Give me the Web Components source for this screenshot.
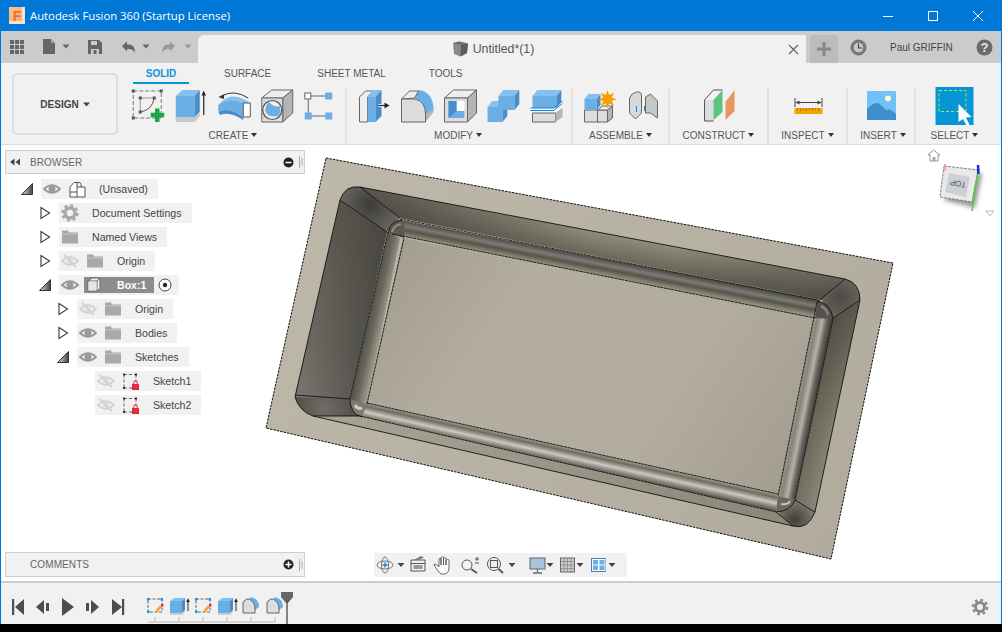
<!DOCTYPE html>
<html><head><meta charset="utf-8"><style>
html,body{margin:0;padding:0;background:#000;overflow:hidden}
body{width:1002px;height:632px;font-family:"Liberation Sans",Arial,sans-serif}
</style></head><body>
<fx-app>
  <fx-titlebar slot="title">Autodesk Fusion 360 (Startup License)</fx-titlebar>
  <fx-tabbar slot="tabs" doc="Untitled*(1)" user="Paul GRIFFIN"></fx-tabbar>
  <fx-ribbon slot="ribbon">
    <fx-group label="CREATE" w="220" pr="8" tools="sketch:148,extrude:190.5,revolve:233,hole:275.5,form:318"></fx-group>
    <fx-group label="MODIFY" w="226" ls="-2" tools="press:374,fillet:417,shell:460,combine:503,split:546"></fx-group>
    <fx-group label="ASSEMBLE" w="97" ls="-1" tools="newcomp:601,joint:642"></fx-group>
    <fx-group label="CONSTRUCT" w="99" ls="-1" tools="construct:719.5"></fx-group>
    <fx-group label="INSPECT" w="79" ls="-1" tools="inspect:808.5"></fx-group>
    <fx-group label="INSERT" w="68" ls="1" tools="insert:882"></fx-group>
    <fx-group label="SELECT" w="77" last tools="select:954.5"></fx-group>
  </fx-ribbon>
  <fx-workspace slot="main">
    <fx-panel title="BROWSER" back sign="minus"></fx-panel>
    <fx-tree>
      <fx-row depth="0" exp="open" eye="on" icon="comp" label="(Unsaved)"></fx-row>
      <fx-row depth="1" exp="closed" icon="gear" label="Document Settings"></fx-row>
      <fx-row depth="1" exp="closed" icon="folder" label="Named Views"></fx-row>
      <fx-row depth="1" exp="closed" eye="off" icon="folder" label="Origin"></fx-row>
      <fx-row depth="1" exp="open" eye="on" icon="box" label="Box:1" selected></fx-row>
      <fx-row depth="2" exp="closed" eye="off" icon="folder" label="Origin"></fx-row>
      <fx-row depth="2" exp="closed" eye="on" icon="folder" label="Bodies"></fx-row>
      <fx-row depth="2" exp="open" eye="on" icon="folder" label="Sketches"></fx-row>
      <fx-row depth="3" eye="off" icon="sketchlock" label="Sketch1"></fx-row>
      <fx-row depth="3" eye="off" icon="sketchlock" label="Sketch2"></fx-row>
    </fx-tree>
    <fx-footer>
      <fx-panel title="COMMENTS" sign="plus" tall></fx-panel>
      <fx-navbar></fx-navbar>
    </fx-footer>
  </fx-workspace>
  <fx-timeline slot="timeline"></fx-timeline>
</fx-app>
<script>
const C={b:'#6aaee6',bt:'#86c0ee',bs:'#4b8bc6',g:'#dcdcdc',gt:'#eeeeee',gs:'#b4b4b4',l:'#666'};
const svg=(x,y,w,h,inner)=>`<svg xmlns="http://www.w3.org/2000/svg" width="${w}" height="${h}" viewBox="${x} ${y} ${w} ${h}" style="display:block">${inner}</svg>`;
const poly=(p,f,st)=>`<polygon points="${p}" fill="${f}"${st?` stroke="${st}" stroke-width="1"`:''}/>`;
const caret=(x,y,c='#333')=>`<path d="M${x-3.5} ${y-2}h7l-3.5 4z" fill="${c}"/>`;
const bluecube=(x,y,w,h,d)=>poly(`${x},${y+d} ${x+w},${y+d} ${x+w},${y+h} ${x},${y+h}`,C.b)+poly(`${x},${y+d} ${x+d*.8},${y} ${x+w+d*.8},${y} ${x+w},${y+d}`,C.bt)+poly(`${x+w},${y+d} ${x+w+d*.8},${y} ${x+w+d*.8},${y+h-d} ${x+w},${y+h}`,C.bs);
const TOOLS={
sketch:`<path d="M133 91H161V118H133Z" fill="none" stroke="#777" stroke-dasharray="4 2"/><path d="M140 112V98H154" fill="none" stroke="#999"/><path d="M154 98Q152 110 140 112" fill="none" stroke="#555"/><g fill="#555"><rect x="131.500" y="89.500" width="3" height="3"/><rect x="159.500" y="89.500" width="3" height="3"/><rect x="131.500" y="116.500" width="3" height="3"/><rect x="138.500" y="96.500" width="3" height="3"/><rect x="152.500" y="96.500" width="3" height="3"/><rect x="138.500" y="110.500" width="3" height="3"/></g><path d="M150.500 115H164M157 108.500V122" stroke="#1aa64b" stroke-width="4.500" fill="none"/>`,
extrude:poly('176,96 195,96 195,117 176,117',C.b)+poly('176,96 183,90 200,90 195,96',C.bt)+poly('195,96 200,90 200,112 195,117',C.bs)+poly('176,117 195,117 200,112 200,116 195,122 176,122','#c9c9c9')+`<path d="M204 115V93" stroke="#222" stroke-width="1.200"/><path d="M204 90.500l-2.200 5h4.400z" fill="#222"/>`,
revolve:`<path d="M218 112V105Q229 96 243 103V117Q229 106 218 112Z" fill="${C.b}"/><path d="M218 105Q229 96 243 103L250 103Q233 91 222 101Z" fill="${C.bt}"/><path d="M243 103H250V117H243Z" fill="#fff" stroke="#555"/><path d="M218 112Q229 106 243 117V120Q229 111 220 115Z" fill="${C.bs}"/><path d="M221 96Q234 89 248 98" fill="none" stroke="#333" stroke-width="1"/><path d="M218 97l6-2.500-.5 4.500z" fill="#333"/>`,
hole:poly('262,98 283,98 293,90 272,90',C.gt,C.l)+poly('283,98 293,90 293,113 283,122',C.gs,C.l)+poly('262,98 283,98 283,122 262,122',C.g,C.l)+`<circle cx="272.500" cy="110" r="9.500" fill="#eee" stroke="#555" stroke-width="1.200"/><path d="M269 102Q275 108 280 106Q282 113 278 116Q268 118 265.500 111Q266 105 269 102Z" fill="${C.b}"/>`,
form:`<path d="M308 96H328M308 96V116H328" stroke="#666" fill="none"/><rect x="304.500" y="93" width="6" height="6" fill="#fff" stroke="#666"/><rect x="325" y="92.500" width="7" height="7" fill="${C.b}"/><rect x="304.500" y="112.500" width="7" height="7" fill="${C.b}"/><rect x="325" y="112.500" width="7" height="7" fill="${C.b}"/>`,
press:`<path d="M359 122V97L365 91H373L367 97V122Z" fill="#eee" stroke="#666"/>`+poly('367,97 375,97 375,122 367,122',C.b)+poly('367,97 372,90 381,90 375,97',C.bt)+poly('375,97 381,90 381,116 375,122',C.bs)+`<path d="M378 105.500H385" stroke="#fff" stroke-width="3"/><path d="M378 105.500H385" stroke="#222" stroke-width="1.300"/><path d="M389 105.500l-5-3v6z" fill="#222"/>`,
fillet:`<path d="M414 98L418 90Q433 92 433 110L425 117Q425 102 414 98Z" fill="${C.b}"/><path d="M401 99L409 91H418L414 98Z" fill="${C.gt}" stroke="#666"/><path d="M425 114L433 109V112L425 122Z" fill="${C.gs}"/><path d="M401 122V99H414Q425 101 425 114V122Z" fill="${C.g}" stroke="#666"/>`,
shell:poly('444,98 467,98 476,90 453,90',C.gt,C.l)+poly('467,98 476,90 476,113 467,122',C.gs,C.l)+poly('444,98 467,98 467,122 444,122',C.g,C.l)+`<rect x="448" y="101" width="16" height="17" fill="#fff"/><path d="M448 101H456V111H464V118H448Z" fill="${C.b}"/><path d="M448 101H456V111L448 118Z" fill="${C.bs}"/>`,
combine:bluecube(487,101,15,21,6)+bluecube(498,90,16,20,6),
split:poly('532,113 555,113 555,122 532,122',C.g,C.l)+poly('555,113 562,108 562,117 555,122',C.gs)+bluecube(532,90,24,18,6)+`<path d="M530 108H553L562 101M530 110.500H553L562 103.500" stroke="#1187e6" stroke-width="1" fill="none"/>`,
newcomp:poly('584,110 599,110 599,122 584,122',C.g,C.l)+poly('597,110 607,110 607,122 597,122',C.g,C.l)+poly('607,110 612,106 612,118 607,122',C.gs,C.l)+poly('597,110 602,106 612,106 607,110',C.gt,C.l)+bluecube(584,94,12,16,5)+`<path d="M607 90l1.700 5 4.800-2.200-2.200 4.700 5 1.800-5 1.800 2.200 4.700-4.800-2.200-1.700 5-1.700-5-4.800 2.200 2.200-4.700-5-1.800 5-1.800-2.200-4.700 4.800 2.200z" fill="#f5a000"/>`,
joint:`<path d="M629 98Q631 93 636 92Q641 91 641 96V113L635 119L629 113Z" fill="#d8d8d8" stroke="#666"/><path d="M645 97L650 94L657 101V118L650 113L645 113Z" fill="#c8c8c8" stroke="#666"/><path d="M636 106V112M644 106V111" stroke="#1187e6" stroke-width="1"/>`,
construct:poly('704,100 713,100 713,121 704,121','#ddd')+poly('704,100 713,90 722,90 713,100','#f2f2f2')+`<path d="M704 121V100L713 90H722M704 121H713" fill="none" stroke="#555"/>`+poly('713,100 722,90 722,112 713,120','#5ac57f')+poly('725,102 734,90 734,111 725,120','#e8975f'),
inspect:`<rect x="794" y="108" width="28" height="6" fill="#f5a200"/><path d="M797 108v2M800 108v3M803 108v2M806 108v3M809 108v2M812 108v3M815 108v2M818 108v3" stroke="#a56c00" stroke-width=".8"/><path d="M794.500 98V107M821.500 98V107" stroke="#444"/><path d="M796 102.500H820" stroke="#444"/><path d="M795 102.500l4-2v4zM821 102.500l-4-2v4z" fill="#444"/>`,
insert:`<rect x="867" y="91" width="29" height="29" fill="#70c0fa"/><circle cx="888" cy="98.500" r="3" fill="#fdf6c8"/><path d="M867 120V109Q873 102 878 103Q883 106 886 110Q890 108 896 114V120Z" fill="#3f8fce"/>`,
select:`<rect x="935" y="87" width="38" height="38" fill="#0696d7"/><rect x="938.500" y="90.500" width="27" height="21" fill="none" stroke="#a6e85c" stroke-dasharray="3 2"/><path d="M958 104L971 117L965.500 117.500L969 125L966 125.500L962.500 119L958 122Z" fill="#fff"/>`
};
const folder=(x,y,c='#a8a8a8')=>`<path d="M${x} ${y}h6l1 2h9v11h-16z" fill="${c}"/><path d="M${x} ${y+3.500}h16" stroke="#d8d8d8" stroke-width=".7"/>`;
const ROWICON={
folder:svg(0,0,22,20,folder(3,3.500)),
gear:svg(0,0,22,20,`<circle cx="11" cy="10" r="5" fill="none" stroke="#a8a8a8" stroke-width="3.500"/><circle cx="11" cy="10" r="7.500" fill="none" stroke="#a8a8a8" stroke-width="2.500" stroke-dasharray="3 2.890"/>`),
comp:svg(0,0,22,20,`<path d="M4 18V8L8 3.500H11V13H4M11 8H19V18H4M11 13V18" fill="#fff" stroke="#555"/><path d="M15 8V5.500Q15 3.500 13 3.500H11" fill="none" stroke="#555"/>`),
box:svg(0,0,22,20,`<path d="M4 16V6L8 3H16V14L13 16Z" fill="#eee" stroke="#666"/><path d="M4 6H13V16" fill="none" stroke="#666"/><path d="M13 6L16 3" stroke="#666"/><rect x="4.500" y="6.500" width="8" height="9" fill="#e4e4e4"/>`),
sketchlock:svg(0,0,22,20,`<path d="M4 3.500H16M4 3.500V17M4 17H12M16 3.500V11" stroke="#666" stroke-dasharray="3 2" fill="none"/><g fill="#333"><rect x="3" y="2.500" width="2" height="2"/><rect x="15" y="2.500" width="2" height="2"/><rect x="3" y="16" width="2" height="2"/></g><rect x="12" y="13" width="7" height="6" fill="#e02c3c"/><path d="M13.800 13V11.500a1.700 1.700 0 0 1 3.400 0V13" fill="none" stroke="#e02c3c"/>`)
};
const eye=(on)=>svg(0,0,22,20,on?`<path d="M3 10Q11 2.500 19 10Q11 17.500 3 10Z" fill="none" stroke="#9a9a9a" stroke-width="1.800"/><circle cx="11" cy="10" r="3.500" fill="#9a9a9a"/>`:`<g opacity=".55"><path d="M3 10Q11 2.500 19 10Q11 17.500 3 10Z" fill="none" stroke="#bbb" stroke-width="1.800"/><circle cx="11" cy="10" r="3" fill="#ccc"/><path d="M5 4L17 16" stroke="#bbb" stroke-width="1.800"/></g>`);
const EXP={open:svg(0,0,18,14,`<defs><linearGradient id="eg" x1="0" y1="0" x2="1" y2="0"><stop offset="0" stop-color="#ddd"/><stop offset="1" stop-color="#444"/></linearGradient></defs><path d="M2.500 12.500L13.500 1.500V12.500Z" fill="url(#eg)" stroke="#333"/>`),
closed:svg(0,0,18,14,`<path d="M4 1.500L12.500 7L4 12.500Z" fill="#fff" stroke="#444" stroke-width="1.200"/>`)};

const def=(name,css,html,init)=>customElements.define(name,class extends HTMLElement{
  connectedCallback(){if(this.shadowRoot)return;const r=this.attachShadow({mode:'open'});
    r.innerHTML=`<style>${css}</style>`+(typeof html==='function'?html(this):html);if(init)init(this,r);}
});

def('fx-app',`:host{display:grid;width:1002px;height:632px;box-sizing:border-box;padding:0 1px;grid-template-columns:1000px;grid-template-rows:31px 32px 82px 436px 43px 8px;background:linear-gradient(#0078d7 624px,#000 624px);font-size:10px;color:#555;overflow:hidden}
 .w{min-width:0;min-height:0;display:grid}.m{position:relative;overflow:hidden}.tt{margin:0 -1px}`,
 `<div class="w tt"><slot name="title"></slot></div><div class="w"><slot name="tabs"></slot></div><div class="w"><slot name="ribbon"></slot></div><div class="w m"><slot name="main"></slot></div><div class="w"><slot name="timeline"></slot></div><div></div>`);

def('fx-titlebar',`:host{display:flex;align-items:center;background:#0078d7;color:#fff;font:11.300px "Open Sans","Liberation Sans",sans-serif;padding:0 2px 0 9px}
 .logo{width:16px;height:17px;background:linear-gradient(135deg,#f8c6a0,#f3a874);display:flex;align-items:center;justify-content:center;color:#ec7018;font:bold 14px "Liberation Sans",sans-serif;margin-right:5px;box-shadow:inset -3px -3px 0 #fbe0c8}
 .t{flex:1}.b{width:45px;display:flex;justify-content:center}`,
 `<span class="logo">F</span><span class="t"><slot></slot></span>
 <span class="b">${svg(0,0,12,12,'<path d="M1 6.500H11" stroke="#fff" stroke-width="1"/>')}</span>
 <span class="b">${svg(0,0,12,12,'<rect x="1.500" y="1.500" width="9" height="9" fill="none" stroke="#fff"/>')}</span>
 <span class="b">${svg(0,0,12,12,'<path d="M1 1L11 11M11 1L1 11" stroke="#fff" stroke-width="1"/>')}</span>`);

const tbLeft=svg(8,35,190,28,
 `<g fill="#666">${[0,1,2].flatMap(i=>[0,1,2].map(j=>`<rect x="${10+i*5}" y="${40+j*5}" width="4" height="4"/>`)).join('')}</g>
 <path d="M43 39h8l4 4v11H43z" fill="#666"/><path d="M51 39v4h4" fill="#aaa"/>${caret(66,46.500,'#666')}
 <path d="M88 40h11l3 3v11H88z" fill="#666"/><rect x="91" y="41" width="6" height="4" fill="#ccc"/><rect x="91" y="49" width="8" height="5" fill="#ccc"/><rect x="93.500" y="50" width="3" height="4" fill="#666"/>
 <path d="M122 46l5-4.500v3h2q6 0 6 8.500q-2-4-6-4h-2v2.500z" fill="#666"/>${caret(146,46.500,'#666')}
 <path d="M175 46l-5-4.500v3h-2q-6 0-6 8.500q2-4 6-4h2v2.500z" fill="#999"/>${caret(188,46.500,'#999')}`);
def('fx-tabbar',`:host{display:flex;background:#cbcbcb;padding-left:7px;align-items:flex-end;height:32px;box-sizing:border-box}
 .doc{width:608px;height:28px;background:#f1f1f1;border-radius:6px 0 0 0;display:flex;align-items:center;justify-content:center;position:relative;font:12.300px "Liberation Sans",sans-serif;color:#555;padding-right:18px;box-sizing:border-box}
 .doc svg{margin-right:3px}.x{position:absolute;right:4px;top:9px}
 .plus{width:28px;height:28px;background:#bcbcbc;margin-left:4px;border-radius:3px 3px 0 0;display:flex;align-items:center;justify-content:center}
 .clk{margin-left:12px;height:28px;display:flex;align-items:center;padding-bottom:4px;box-sizing:border-box}
 .u{margin-left:23px;font:10px "Liberation Sans",sans-serif;color:#444;height:28px;display:flex;align-items:center;padding-bottom:4px;box-sizing:border-box;width:61px;white-space:nowrap}
 .q{margin-left:25px;height:28px;display:flex;align-items:center;padding-bottom:4px;box-sizing:border-box}`,
 h=>`${tbLeft}<div class="doc">${svg(0,0,18,18,`<path d="M1 3L7 1.500L16 3.500L15 13L8.500 16.500L2 14Z" fill="#8a8a8a"/><path d="M1 3L9 5L16 3.500L7 1.500Z" fill="#6f6f6f"/><path d="M9 5L8.500 16.500L15 13L16 3.500Z" fill="#5c5c5c"/>`)}<span>${h.getAttribute('doc')}</span><span class="x">${svg(0,0,11,11,'<path d="M1 1L10 10M10 1L1 10" stroke="#666" stroke-width="1.200"/>')}</span></div>
 <div class="plus">${svg(0,0,14,14,'<path d="M0 7H14M7 0V14" stroke="#888" stroke-width="3"/>')}</div>
 <div class="clk">${svg(0,0,17,17,'<circle cx="8.500" cy="8.500" r="7.500" fill="#888" stroke="#666"/><circle cx="8.500" cy="8.500" r="5.500" fill="#c8c8c8" stroke="#555"/><path d="M8.500 4.500V9H12" fill="none" stroke="#444" stroke-width="1.200"/>')}</div>
 <div class="u">${h.getAttribute('user')}</div>
 <div class="q">${svg(0,0,17,17,'<circle cx="8.500" cy="8.500" r="8" fill="#6a6a6a"/><text x="8.500" y="13" text-anchor="middle" font-family="Liberation Sans,sans-serif" font-weight="bold" font-size="13" fill="#e8e8e8">?</text>')}</div>`);

def('fx-ribbon',`:host{display:flex;background:#f1f1f1;border-bottom:1px solid #dcdcdc;box-sizing:border-box;padding-left:11px;height:82px}
 .d{width:106px;height:62px;margin-top:10px;box-sizing:border-box;border:2px solid #dedede;border-radius:5px;display:flex;align-items:center;justify-content:center;font:bold 10px "Liberation Sans",sans-serif;color:#444;gap:4px}
 .r{margin-left:9px;display:flex;flex-direction:column}
 .tabs{display:flex;height:23px;align-items:flex-start}
 .tab{font:10px "Liberation Sans",sans-serif;color:#555;padding-top:5px;box-sizing:border-box;height:21px;white-space:nowrap}
 .on{width:56px;margin-left:6px;text-align:center;color:#0696d7;font-weight:bold;border-bottom:2px solid #0696d7}
 .gs{display:flex}`,
 `<div class="d">DESIGN ${svg(0,0,7,5,'<path d="M0 0.500h7l-3.500 4z" fill="#444"/>')}</div>
 <div class="r"><div class="tabs"><span class="tab on">SOLID</span><span class="tab" style="margin-left:35px">SURFACE</span><span class="tab" style="margin-left:46px">SHEET METAL</span><span class="tab" style="margin-left:43px">TOOLS</span></div>
 <div class="gs"><slot></slot></div></div>`);

def('fx-group',`:host{display:flex;flex-direction:column;align-items:center;box-sizing:border-box;height:58px;position:relative;margin-top:1px}
 .i{display:flex;height:40px;gap:0}.lb{font:10px "Liberation Sans",sans-serif;color:#555;display:flex;align-items:center;gap:3px;height:16px;margin-top:1px;white-space:nowrap}
 .sep{position:absolute;right:0;top:2px;bottom:0;width:2px;background:#e2e2e2}`,
 h=>{const w=h.getAttribute('w'),pr=h.getAttribute('pr')||0,ls=+(h.getAttribute('ls')||0);h.style.width=w+'px';h.style.paddingRight=(+pr)+'px';
 const ts=h.getAttribute('tools').split(',').map(s=>s.split(':')),cs=ts.map(t=>+t[1]),sp=cs.length>1?cs[1]-cs[0]:42;
 const lm=ls<0?`margin-right:${-2*ls}px`:`margin-left:${2*ls}px`;
 return `<div class="i">${ts.map(([n,c],i)=>{const l=i?(cs[i-1]+cs[i])/2:cs[0]-sp/2,r=i<cs.length-1?(cs[i]+cs[i+1])/2:cs[i]+sp/2;return svg(l,86,r-l,40,TOOLS[n]).replace('display:block','display:block;overflow:visible')}).join('')}</div><div class="lb" style="${lm}">${h.getAttribute('label')} ${svg(0,0,6,4,'<path d="M0 0h6l-3 4z" fill="#333"/>')}</div>${h.hasAttribute('last')?'':'<div class="sep"></div>'}`});

const model=(()=>{
 const band=(id,x1,y1,x2,y2,st)=>`<linearGradient id="${id}" gradientUnits="userSpaceOnUse" x1="${x1}" y1="${y1}" x2="${x2}" y2="${y2}">${st.map(([o,c,a])=>`<stop offset="${o}" stop-color="${c}"${a!==undefined?` stop-opacity="${a}"`:''}/>`).join('')}</linearGradient>`;
 const defs=`<defs>
 ${band('plate',300,160,860,560,[[0,'#bdb8a9'],[1,'#b0ab9c']])}
 ${band('floor',400,240,780,490,[[0,'#a39e8f'],[.3,'#b3ae9f'],[.7,'#b1ac9d'],[1,'#a39e8f']])}
 ${band('tw',360,200,860,300,[[0,'#56544c'],[.45,'#96927f'],[.62,'#9a9684'],[1,'#67645a']])}
 ${band('tws',603,228,598,258,[[0,'#2e2c28',0],[1,'#2e2c28',.45]])}
 ${band('lw',330,200,320,410,[[0,'#55534b'],[.7,'#6c6a62'],[1,'#7c7a72']])}
 ${band('lws',318,300,372,312,[[0,'#2a2925',0],[1,'#2a2925',.4]])}
 ${band('rw',840,300,800,510,[[0,'#5c5a51'],[.6,'#85826f'],[1,'#8f8c7e']])}
 ${band('rws',842,400,814,394,[[0,'#2a2925',0],[1,'#2a2925',.35]])}
 ${band('bw',320,420,790,520,[[0,'#a8a394'],[1,'#8b8778']])}
 ${band('tt',600,258,596.500,276,[[0,'#45443e'],[.12,'#5a5952'],[.32,'#7c7b74'],[.55,'#55544c'],[.8,'#85826f'],[1,'#a39e8f']])}
 ${band('bt',570,448,566,466,[[0,'#a09c8e'],[.2,'#6d6b62'],[.5,'#ccc9c1'],[.7,'#8c8a80'],[1,'#403f3a']])}
 ${band('lt',367,315,385,319,[[0,'#4c4b44'],[.5,'#6b695f'],[1,'#a39e8f']])}
 ${band('rt',792,410,812,414,[[0,'#a39e8f'],[.35,'#87857c'],[.6,'#b4b2a9'],[.8,'#6d6b63'],[1,'#45443f']])}
 <radialGradient id="ctl" gradientUnits="userSpaceOnUse" cx="370" cy="205" r="32"><stop offset="0" stop-color="#3e3c37"/><stop offset="1" stop-color="#696760"/></radialGradient>
 <radialGradient id="ctr" gradientUnits="userSpaceOnUse" cx="840" cy="298" r="24"><stop offset="0" stop-color="#4b4a44"/><stop offset="1" stop-color="#6a675e"/></radialGradient>
 <radialGradient id="cbr" gradientUnits="userSpaceOnUse" cx="795" cy="520" r="24"><stop offset="0" stop-color="#3f3e39"/><stop offset="1" stop-color="#8a8678"/></radialGradient>
 <radialGradient id="cbl" gradientUnits="userSpaceOnUse" cx="325" cy="408" r="34"><stop offset="0" stop-color="#6f6d65"/><stop offset="1" stop-color="#4d4b45"/></radialGradient>
 </defs>`;
 const line='fill="none" stroke="#111" stroke-width=".9"';
 return svg(0,145,1002,436,defs+
 `<polygon points="326,158 893,263 831,559 266,428" fill="url(#plate)"/>
 <polygon points="326,158 893,263 831,559 266,428" fill="none" stroke="#111" stroke-width="1" stroke-dasharray="2.500 1"/>
 <path d="M360 187L845 279L822 300L400 218Z" fill="url(#tw)"/><path d="M360 187L845 279L822 300L400 218Z" fill="url(#tws)"/>
 <path d="M340 200L387 232L350 400L295 397Z" fill="url(#lw)"/><path d="M340 200L387 232L350 400L295 397Z" fill="url(#lws)"/>
 <path d="M860 300L832 318L795 500L815 512Z" fill="url(#rw)"/><path d="M860 300L832 318L795 500L815 512Z" fill="url(#rws)"/>
 <path d="M313 416L360 415L778 513L793 526Z" fill="url(#bw)"/>
 <path d="M340 200Q345 185 360 187L400 218L387 232Z" fill="url(#ctl)"/>
 <path d="M845 279Q860 283 860 300L832 318L822 300Z" fill="url(#ctr)"/>
 <path d="M815 512Q808 530 793 526L778 513L795 500Z" fill="url(#cbr)"/>
 <path d="M295 397Q299 411 313 416L360 416L350 399Z" fill="url(#cbl)"/>
 <path d="M403 238L815 318L778 495L367 404Z" fill="url(#floor)"/>
 <path d="M400 220L820 300L815 318L392 234Z" fill="url(#tt)"/>
 <path d="M367 403L778 494L776 512L360 416Z" fill="url(#bt)"/>
 <path d="M388 232L400 238L367 404L350 400Z" fill="url(#lt)"/>
 <path d="M817 303L833 318L795 500L778 496Z" fill="url(#rt)"/>
 <path d="M388 233Q390 221 402 220Q406 226 404 238Z" fill="#5a5850"/><path d="M392 232Q394 225 401 224" stroke="#8f8d85" stroke-width="2" fill="none"/>
 <path d="M817 301Q831 303 833 319L815 318Z" fill="#54524b"/><path d="M821 306Q827 309 828 315" stroke="#8b8980" stroke-width="2" fill="none"/>
 <path d="M778 496L795 500Q791 511 776 512Z" fill="#6a685f"/><path d="M781 504Q788 505 790 501" stroke="#c6c4bb" stroke-width="2" fill="none"/>
 <path d="M350 399L367 404L362 417Q350 414 350 399Z" fill="#7c7a70"/><path d="M355 405Q358 410 362 408" stroke="#cfcdc5" stroke-width="3" fill="none"/>
 <path d="M360 187L845 279Q860 283 860 300L815 512Q808 530 793 526L313 416Q299 411 295 397L340 200Q345 185 360 187Z" ${line}/>
 <path d="M400 219L818 300M392 234L815 318M350 399L388 232M367 404L404 238M817 302L778 496M833 319L795 500M367 403L778 494M360 416L776 512" ${line} stroke-dasharray="3 .6"/>
 <path d="M340 200L387 232M360 187L400 218M845 279L820 300M860 300L833 318M815 512L795 500M793 526L776 512M295 395L350 399M313 416L360 416" ${line}/>
 <path d="M388 233Q390 221 402 220M817 301Q831 303 833 319M795 500Q791 511 776 512M350 399Q350 414 362 417" ${line}/>`);
})();
const cube=svg(925,148,70,72,`<defs><filter id="bl" x="-30%" y="-30%" width="160%" height="160%"><feGaussianBlur stdDeviation="2"/></filter></defs>
 <path d="M933.500 150L928 155H930V161H938V155H940Z" fill="#fff" stroke="#888" stroke-width=".9"/><rect x="932.500" y="157" width="3" height="4" fill="#aaa"/>
 <path d="M978 172L982 175L975 208L943 200Z" fill="#999" filter="url(#bl)"/>
 <path d="M944 166L978 170L972 202L940 197Z" fill="#e9e9e9" stroke="#777" stroke-width=".9" stroke-dasharray="3 1"/>
 <path d="M949 173L970 177L966 197L945 192Z" fill="#cdd0d6"/>
 <text x="0" y="0" transform="translate(958 183) rotate(191)" font-family="Liberation Sans,sans-serif" font-size="8" fill="#555" text-anchor="middle" dominant-baseline="middle">TOP</text>
 <path d="M978 171L972 211" stroke="#4cd13c" stroke-width="1.500"/><path d="M978 165L978.500 174" stroke="#2222dd" stroke-width="2.500"/><path d="M945 164V171" stroke="#e89b9b" stroke-width="1.500"/>
 <path d="M986 211H994L990 216Z" fill="#fff" stroke="#aaa" stroke-width=".8"/>`);
def('fx-workspace',`:host{display:flex;flex-direction:column;background:#fff;position:relative;height:436px;padding:5px 0 4px 4px;box-sizing:border-box}
 .model{position:absolute;left:-1px;top:0}.cube{position:absolute;left:924px;top:3px}::slotted(*){position:relative}`,
 `<div class="model">${model}</div><div class="cube">${cube}</div><slot></slot>`);

def('fx-panel',`:host{display:flex;align-items:center;width:300px;height:24px;flex:none;box-sizing:border-box;background:#f1f1f1;border:1px solid #cfcfcf;font:10px "Liberation Sans",sans-serif;color:#666}
 :host([tall]){height:25px}
 .b{width:24px;display:flex;box-sizing:border-box;padding-left:3px}.t{flex:1;letter-spacing:.1px}.s{margin-right:5px}.g{margin-right:1px}`,
 h=>`<span class="b">${h.hasAttribute('back')?svg(0,0,12,8,'<path d="M5.500 .5v7L1 4zM11 .5v7L6.500 4z" fill="#444"/>'):''}</span><span class="t">${h.getAttribute('title')}</span>
 <span class="s">${svg(0,0,11,11,`<circle cx="5.500" cy="5.500" r="5" fill="#222"/><path d="M2.500 5.500H8.500${h.getAttribute('sign')==='plus'?'M5.500 2.500V8.500':''}" stroke="#fff" stroke-width="1.500"/>`)}</span>
 <span class="g">${svg(0,0,4,12,'<path d="M.5 0V12M3 2V10" stroke="#aaa"/>')}</span>`);

def('fx-tree',`:host{display:flex;flex-direction:column;gap:4px;margin:5px 0 0 0;flex:1;min-height:0}`,`<slot></slot>`);

def('fx-row',`:host{display:flex;height:20px;align-items:center;font:10.600px "Liberation Sans",sans-serif;color:#444}
 .e{width:18px;flex:none;display:flex;justify-content:center;margin:0 4px 0 14px}
 .p{display:flex;align-items:center;height:20px;background:#f1f1f1}
 .c{width:22px;height:20px;flex:none}
 .m{display:flex;align-items:center;height:16px;margin-left:3px}
 .m.np{margin-left:0}
 .l{margin-left:11px;padding-right:10px;white-space:nowrap;line-height:16px}
 .sel{background:#8c8c8c}.sel .l{color:#fff;font-weight:bold;padding-right:8px}
 .rd{width:25px;display:flex;justify-content:center;box-sizing:border-box;padding-right:3px}`,
 h=>{const d=+h.getAttribute('depth'),ex=h.getAttribute('exp'),ey=h.getAttribute('eye'),sel=h.hasAttribute('selected');
 h.style.marginLeft=(18*d)+'px';
 return `<span class="e">${ex?EXP[ex]:''}</span><div class="p">${ey?`<span class="c">${eye(ey==='on')}</span>`:''}
 <div class="m ${ey?'':'np'} ${sel?'sel':''}"><span class="c" style="margin-top:-2px;margin-bottom:-2px">${ROWICON[h.getAttribute('icon')]}</span><span class="l">${h.getAttribute('label')}</span></div>
 ${sel?`<span class="rd">${svg(0,0,14,14,'<circle cx="7" cy="7" r="6" fill="#fff" stroke="#444"/><circle cx="7" cy="7" r="2.200" fill="#222"/>')}</span>`:''}</div>`});

def('fx-footer',`:host{display:flex;align-items:flex-end;flex:none}`,`<slot></slot>`);

const ni=(x,w,inner)=>svg(x,553,w,24,inner);
const navHTML=[
 ni(374,22,`<ellipse cx="385" cy="565" rx="8" ry="4" fill="none" stroke="#777"/><ellipse cx="385" cy="565" rx="3.500" ry="8" fill="none" stroke="#777"/><path d="M382.500 565H387.500M385 562.500V567.500" stroke="#1187e6" stroke-width="1.500"/>`),
 ni(396,10,caret(401,565,'#444')),
 ni(406,24,`<path d="M411 560h14v11h-14zM411 563.500h14" fill="none" stroke="#555"/><rect x="413.500" y="565" width="9" height="4" fill="#999"/><path d="M414 560l7-4 3 1.500-6 2.500" fill="#777"/>`),
 ni(430,26,`<path d="M438 571L434 565Q434 563 437 565L439 567V559Q440 557 441 559V565V557.500Q442.500 556 443.500 557.500V565V558Q445 557 446 558.500V565V560Q447.500 558.500 449 560V567Q449 573 445 574H441Z" fill="#fff" stroke="#555" stroke-width=".9"/>`),
 ni(456,28,`<circle cx="467" cy="565" r="5" fill="#eef4fa" stroke="#555"/><path d="M471 569L477 573" stroke="#555" stroke-width="2"/><path d="M475 559H479M477 557V561M475 563H479" stroke="#555"/>`),
 ni(484,22,`<circle cx="494" cy="564" r="6.500" fill="none" stroke="#555"/><rect x="490.500" y="560.500" width="7" height="7" fill="#eee" stroke="#555"/><path d="M498.500 569L503 573" stroke="#555" stroke-width="2"/>`),
 ni(506,12,caret(512,565,'#444')),
 ni(518,8,''),
 ni(526,20,`<rect x="530" y="558" width="15" height="11" fill="#a8c4dc" stroke="#666"/><path d="M537.500 569V572M533 573H542" stroke="#666" stroke-width="1.300"/>`),
 ni(546,10,caret(550,565,'#444')),
 ni(556,20,`<rect x="560.500" y="558" width="14" height="14" fill="#cdcdcd" stroke="#666"/><path d="M564 558V572M567.500 558V572M571 558V572M560.500 561.500H574.500M560.500 565H574.500M560.500 568.500H574.500" stroke="#888" stroke-width=".8"/>`),
 ni(576,10,caret(580,565,'#444')),
 ni(586,20,`<rect x="591.500" y="558.500" width="14.500" height="13" fill="#fff" stroke="#4f7ea8"/><rect x="593" y="560" width="5" height="4.500" fill="#6aaee6"/><rect x="599.500" y="560" width="5" height="4.500" fill="#6aaee6"/><rect x="593" y="565.500" width="5" height="4.500" fill="#6aaee6"/><rect x="599.500" y="565.500" width="5" height="4.500" fill="#6aaee6"/>`),
 ni(606,12,caret(612,565,'#444'))
].join('');
def('fx-navbar',`:host{display:flex;width:253px;height:24px;margin-left:69px;background:#f1f1f1}`,navHTML);

const tlSk=x=>`<rect x="${x-7}" y="599" width="14" height="13" fill="none" stroke="#666" stroke-dasharray="3 1.500"/><g fill="#1a90e0"><rect x="${x-8}" y="598" width="2.500" height="2.500"/><rect x="${x+5.500}" y="598" width="2.500" height="2.500"/><rect x="${x-8}" y="610.500" width="2.500" height="2.500"/></g><path d="M${x+6} 606L${x+1} 612" stroke="#f0a030" stroke-width="2.500"/><rect x="${x+6}" y="604" width="2.500" height="2.500" fill="#e02c3c"/>`;
const tlEx=x=>poly(`${x-8},601 ${x+4},601 ${x+4},613 ${x-8},613`,C.b)+poly(`${x-8},601 ${x-4},598 ${x+7},598 ${x+4},601`,C.bt)+poly(`${x+4},601 ${x+7},598 ${x+7},610 ${x+4},613`,C.bs)+poly(`${x-8},613 ${x+4},613 ${x+7},610 ${x+7},612 ${x+4},615 ${x-8},615`,'#ccc')+`<path d="M${x+10} 611V600" stroke="#222"/><path d="M${x+10} 598l-1.800 4h3.600z" fill="#222"/>`;
const tlFi=x=>`<path d="M${x-2} 600L${x} 597Q${x+8} 599 ${x+8} 607L${x+4} 610Q${x+4} 602 ${x-2} 600Z" fill="${C.b}"/><path d="M${x-8} 613V602L${x-4} 599H${x-2}Q${x+4} 602 ${x+4} 609V613Z" fill="#ddd" stroke="#666"/>`;
def('fx-timeline',`:host{display:flex;align-items:flex-start;background:#f1f1f1;border-top:2px solid #cdcdcd;box-sizing:border-box;height:43px}
 .sp{flex:1}`,
 svg(1,583,139,41,`<g fill="#4d4d4d"><path d="M12 599h2.200v16H12zM24 599v16l-9-8z"/><path d="M36 607l8-7v14zM46 603h3v8h-3z"/><path d="M62 598l12 9-12 9z"/><path d="M86 603h3v8h-3zM99 607l-8-7v14z"/><path d="M112 599l10 8-10 8zM122 599h2.200v16H122z"/></g>`)+
 svg(140,583,160,41,tlSk(155)+tlEx(178)+tlSk(203)+tlEx(226)+tlFi(251)+tlFi(275)+
 `<path d="M148 622H276M155 617V622M179 617V622M203 617V622M227 617V622M251 617V622M275 617V622" stroke="#ccc" stroke-width="1.500"/><path d="M281 592H293V597L288 603H286L281 597Z" fill="#666"/><path d="M287 600V624" stroke="#555" stroke-width="1.400"/>`)+
 `<span class="sp"></span>`+svg(970,583,31,41,`<circle cx="980" cy="607" r="4.500" fill="none" stroke="#8a8a8a" stroke-width="3"/><circle cx="980" cy="607" r="7" fill="none" stroke="#8a8a8a" stroke-width="2.600" stroke-dasharray="2.750 2.750"/>`));
</script>
</body></html>
